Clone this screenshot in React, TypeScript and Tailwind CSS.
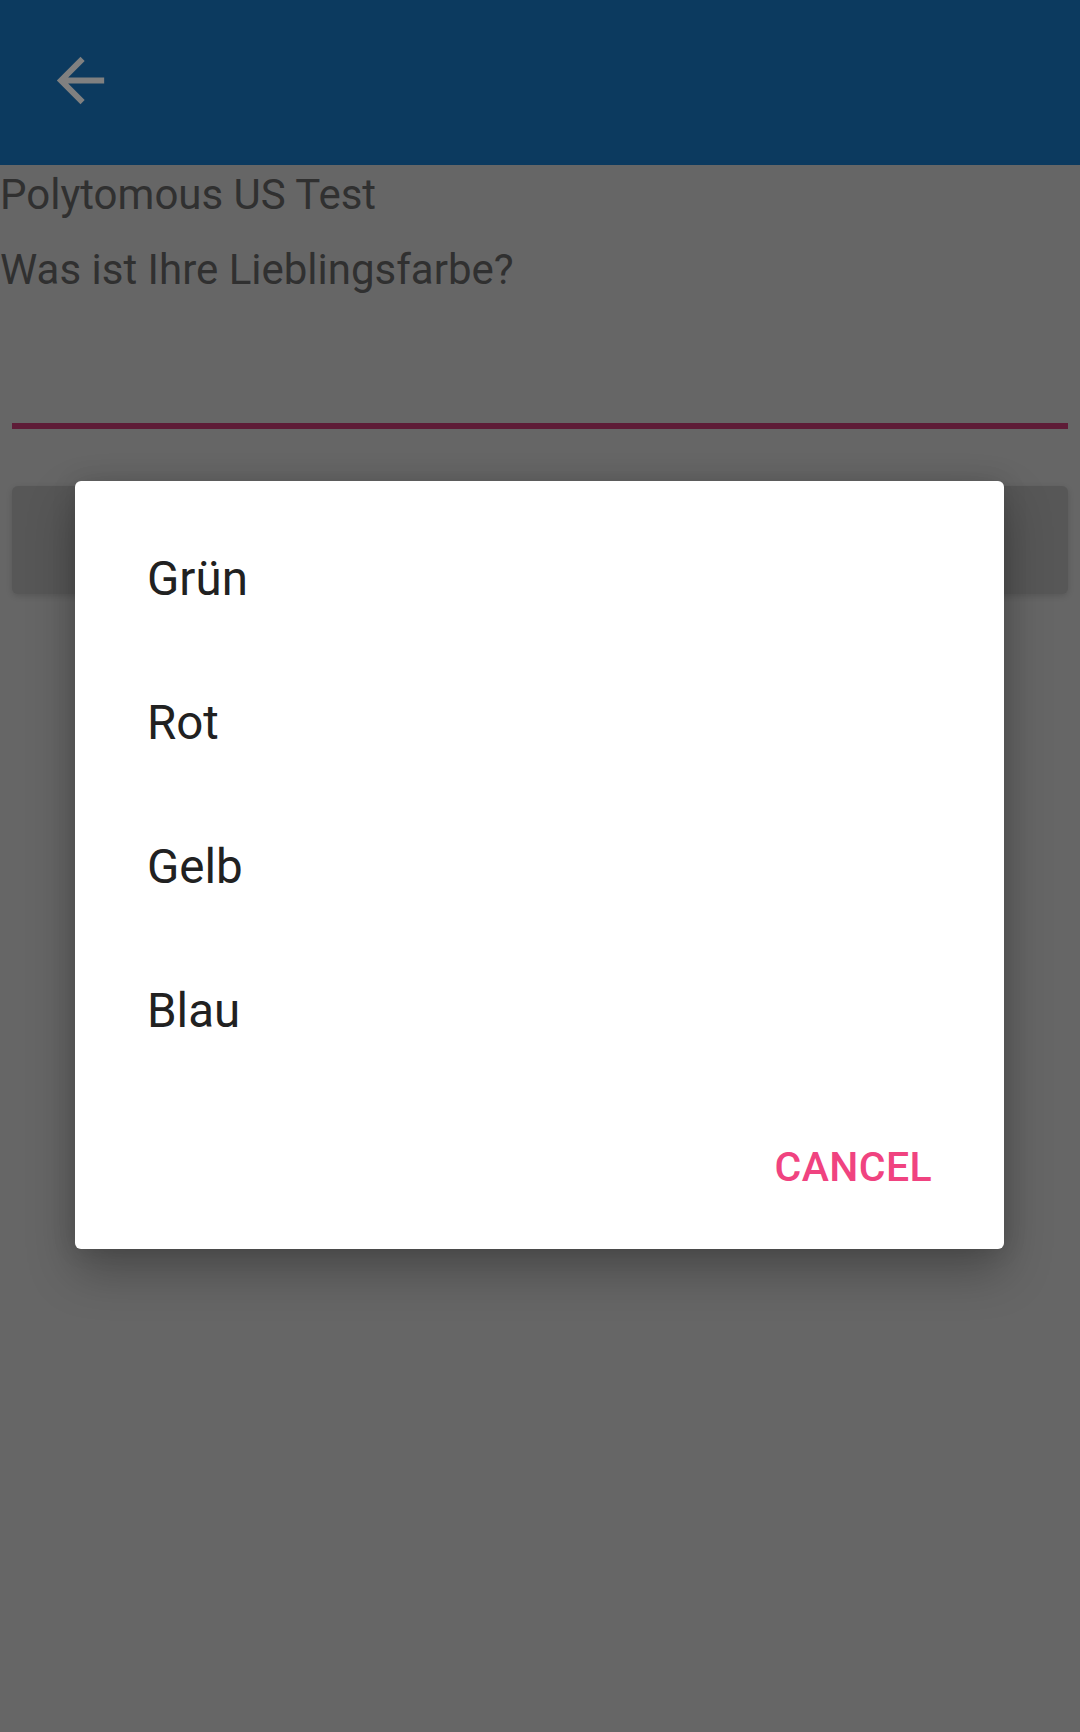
const options = ['Grün', 'Rot', 'Gelb', 'Blau'];

function BackArrow() {
    return (
        <svg viewBox="0 0 24 24" className="h-[71px] w-[71px]" fill="#808080">
            <path d="M20 11H7.83l5.59-5.59L12 4l-8 8 8 8 1.41-1.41L7.83 13H20v-2z" />
        </svg>
    );
}

export default function App() {
    return (
        <div className="relative min-h-[1732px] w-[1080px] bg-[#666666]" style={{ fontFamily: 'Roboto, "Noto Sans", sans-serif' }}>
            {/* Toolbar */}
            <div className="flex h-[165px] items-center bg-[#0c3a5f] pb-[4px] pl-[45px]">
                <BackArrow />
            </div>

            {/* Question (dimmed behind the dialog) */}
            <div className="text-[42px] leading-[60px] text-[#303030]">
                <p>Polytomous US Test</p>
                <p className="mt-[15px]">Was ist Ihre Lieblingsfarbe?</p>
            </div>

            <div className="mx-3 mt-[123px] h-[6px] bg-[#5e1c37]" />

            <div className="mx-3 mt-[57px] h-[108px] rounded-md bg-[#575757] shadow-[0_2px_6px_rgba(0,0,0,0.15)]" />

            {/* Choice dialog */}
            <div className="absolute left-[75px] top-[481px] flex h-[768px] w-[929px] flex-col rounded-[6px] bg-white shadow-[0_22px_48px_rgba(0,0,0,0.28),0_0_24px_rgba(0,0,0,0.12)]">
                <ul className="pt-[26px]">
                    {options.map((option) => (
                        <li key={option} className="h-[144px] pl-[72px] text-[47.5px] leading-[144px] text-[#212121]">
                            {option}
                        </li>
                    ))}
                </ul>
                <div className="mt-[36px] flex justify-end pr-[72px]">
                    <button className="text-[41px] font-medium leading-[96px] tracking-[0.4px] text-[#f04380]">
                        CANCEL
                    </button>
                </div>
            </div>
        </div>
    );
}
